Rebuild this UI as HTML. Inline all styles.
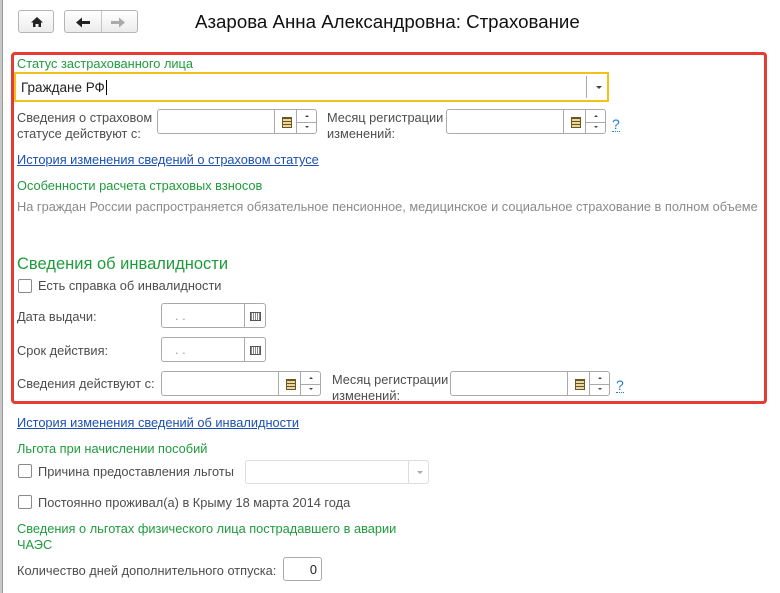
<!DOCTYPE html>
<html><head><meta charset="utf-8"><style>
*{margin:0;padding:0;box-sizing:border-box}
body{width:780px;height:593px;background:#fff;font-family:"Liberation Sans",Arial,sans-serif;font-size:12.8px;color:#4d4d4d;position:relative;overflow:hidden}
.a{position:absolute;white-space:nowrap}
.g{color:#1f9b3c}
.lnk{color:#1a4fb5;text-decoration:underline}
.btn{position:absolute;border:1px solid #b5b5b5;border-radius:3px;background:linear-gradient(#fff,#ececec)}
.fld{position:absolute;border:1px solid #aaa;border-radius:3px;background:#fff}
.cal{position:absolute;top:0;bottom:0;border-left:1px solid #aaa;width:24px}
.spin{position:absolute;top:0;bottom:0;right:0;width:20px;border-left:1px solid #aaa}
.spin:before{content:"";position:absolute;left:0;right:0;top:50%;border-top:1px solid #aaa}
.spin i{position:absolute;left:8px;border:2px solid transparent}
.spin i.u{top:3px;border-bottom:2px solid #444}
.spin i.d{bottom:3px;border-top:2px solid #444}
.cb{position:absolute;width:14px;height:14px;border:1px solid #8a8a8a;border-radius:2px;background:#fff}
.q{position:absolute;color:#1a7fd0;font-size:14px;border-bottom:1px dotted #1a7fd0;line-height:14px}
.ic{position:absolute;width:10px;height:11px;left:7px;top:50%;margin-top:-5px;border:1px solid #6b5520;background:repeating-linear-gradient(#6b5520 0 1px,#e8d6a0 1px 3px)}
.ic2{position:absolute;width:11px;height:9px;left:5px;top:50%;margin-top:-4px;border:1px solid #555;background:repeating-linear-gradient(90deg,#888 0 1px,#fff 1px 2px)}
</style></head><body>
<div style="position:absolute;left:0;top:0;width:3px;height:593px;background:#c8c8c8;border-right:1px solid #999"></div>

<div class="btn" style="left:18px;top:10px;width:36px;height:23px"><svg width="36" height="23" viewBox="0 0 36 23"><path d="M12 11.5 L18 6 L24 11.5 H22 V16 H19.5 V13 H16.5 V16 H14 V11.5Z" fill="#222"/></svg></div>
<div class="btn" style="left:64px;top:10px;width:74px;height:23px"><div style="position:absolute;left:36px;top:0;bottom:0;border-left:1px solid #c5c5c5"></div><svg width="74" height="23" viewBox="0 0 74 23"><path d="M11 11.5 L17 6.5 V10 H25 V13 H17 V16.5Z" fill="#222"/><path d="M60 11.5 L54 6.5 V10 H46 V13 H54 V16.5Z" fill="#aaa"/></svg></div>
<div class="a" style="left:195px;top:11px;font-size:18.7px;color:#111">Азарова Анна Александровна: Страхование</div>

<div style="position:absolute;left:11px;top:52px;width:756px;height:352px;border:3px solid #e53b33;border-radius:4px"></div>

<div class="a g" style="left:17px;top:56px">Статус застрахованного лица</div>
<div style="position:absolute;left:14px;top:72px;width:595px;height:30px;border:2px solid #f2c21a;background:#fff"><div class="a" style="left:5px;top:6px;color:#222;font-size:13.5px">Граждане РФ<span style="border-left:1px solid #000;margin-left:1px"></span></div><div style="position:absolute;left:570px;top:2px;bottom:2px;border-left:1px solid #aaa"></div><div style="position:absolute;left:580px;top:12px;border:3px solid transparent;border-top:3px solid #444"></div></div>

<div class="a" style="left:17px;top:110px;line-height:16px">Сведения о страховом<br>статусе действуют с:</div>
<div class="fld" style="left:157px;top:109px;width:160px;height:25px"><div class="cal" style="left:116px"><div class="ic"></div></div><div class="spin"><i class="u"></i><i class="d"></i></div></div>
<div class="a" style="left:327px;top:110px;line-height:16px">Месяц регистрации<br>изменений:</div>
<div class="fld" style="left:446px;top:109px;width:160px;height:25px"><div class="cal" style="left:116px"><div class="ic"></div></div><div class="spin"><i class="u"></i><i class="d"></i></div></div>
<div class="q" style="left:612px;top:117px">?</div>

<div class="a lnk" style="left:17px;top:152px">История изменения сведений о страховом статусе</div>
<div class="a g" style="left:17px;top:178px">Особенности расчета страховых взносов</div>
<div class="a" style="left:17px;top:199px;width:747px;overflow:hidden;color:#8a8a8a">На граждан России распространяется обязательное пенсионное, медицинское и социальное страхование в полном объеме</div>

<div class="a g" style="left:17px;top:255px;font-size:16.5px">Сведения об инвалидности</div>
<div class="cb" style="left:18px;top:279px"></div>
<div class="a" style="left:38px;top:278px">Есть справка об инвалидности</div>

<div class="a" style="left:17px;top:309px">Дата выдачи:</div>
<div class="fld" style="left:161px;top:303px;width:105px;height:25px"><div class="a" style="left:13px;top:4px;color:#999">. .</div><div class="cal" style="left:82px;width:22px"><div class="ic2"></div></div></div>
<div class="a" style="left:17px;top:343px">Срок действия:</div>
<div class="fld" style="left:161px;top:337px;width:105px;height:25px"><div class="a" style="left:13px;top:4px;color:#999">. .</div><div class="cal" style="left:82px;width:22px"><div class="ic2"></div></div></div>

<div class="a" style="left:17px;top:376px">Сведения действуют с:</div>
<div class="fld" style="left:161px;top:371px;width:160px;height:25px"><div class="cal" style="left:116px"><div class="ic"></div></div><div class="spin"><i class="u"></i><i class="d"></i></div></div>
<div class="a" style="left:332px;top:372px;line-height:16px">Месяц регистрации<br>изменений:</div>
<div class="fld" style="left:450px;top:371px;width:160px;height:25px"><div class="cal" style="left:116px"><div class="ic"></div></div><div class="spin"><i class="u"></i><i class="d"></i></div></div>
<div class="q" style="left:616px;top:378px">?</div>

<div class="a lnk" style="left:17px;top:415px">История изменения сведений об инвалидности</div>
<div class="a g" style="left:17px;top:441px">Льгота при начислении пособий</div>
<div class="cb" style="left:18px;top:464px"></div>
<div class="a" style="left:38px;top:464px">Причина предоставления льготы</div>
<div class="fld" style="left:245px;top:460px;width:184px;height:24px;border-color:#ddd"><div style="position:absolute;left:162px;top:0;bottom:0;border-left:1px solid #ddd"></div><div style="position:absolute;left:171px;top:10px;border:3px solid transparent;border-top:3px solid #aaa"></div></div>
<div class="cb" style="left:18px;top:495px"></div>
<div class="a" style="left:38px;top:495px">Постоянно проживал(а) в Крыму 18 марта 2014 года</div>
<div class="a g" style="left:17px;top:521px;line-height:16px">Сведения о льготах физического лица пострадавшего в аварии<br>ЧАЭС</div>
<div class="a" style="left:17px;top:563px">Количество дней дополнительного отпуска:</div>
<div class="fld" style="left:283px;top:557px;width:39px;height:24px"><div class="a" style="right:4px;top:4px;color:#222">0</div></div>
</body></html>
